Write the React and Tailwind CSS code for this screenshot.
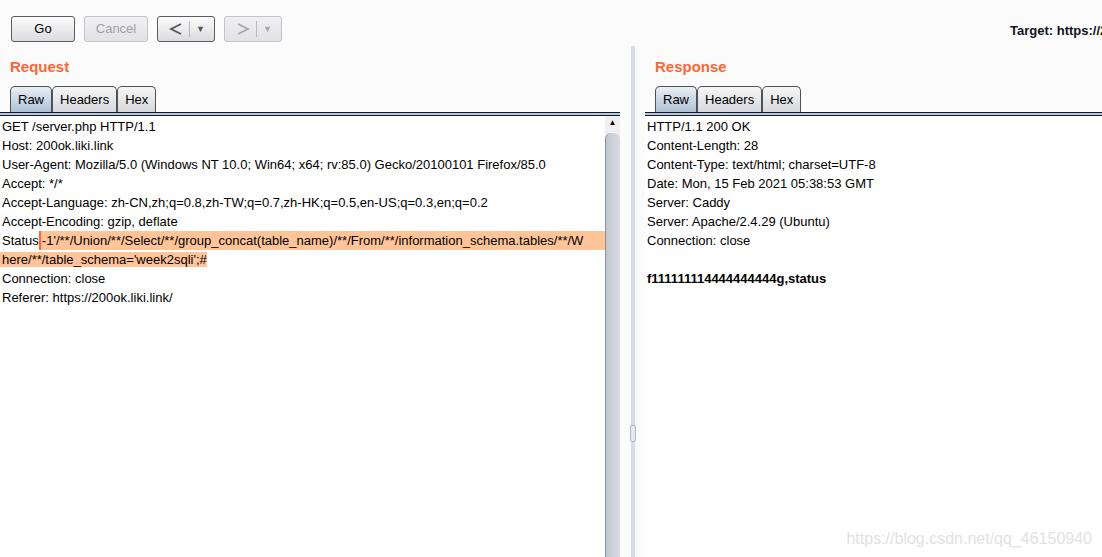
const requestLines = [
  "GET /server.php HTTP/1.1",
  "Host: 200ok.liki.link",
  "User-Agent: Mozilla/5.0 (Windows NT 10.0; Win64; x64; rv:85.0) Gecko/20100101 Firefox/85.0",
  "Accept: */*",
  "Accept-Language: zh-CN,zh;q=0.8,zh-TW;q=0.7,zh-HK;q=0.5,en-US;q=0.3,en;q=0.2",
  "Accept-Encoding: gzip, deflate",
];

const requestTail = ["Connection: close", "Referer: https://200ok.liki.link/"];

const responseLines = [
  "HTTP/1.1 200 OK",
  "Content-Length: 28",
  "Content-Type: text/html; charset=UTF-8",
  "Date: Mon, 15 Feb 2021 05:38:53 GMT",
  "Server: Caddy",
  "Server: Apache/2.4.29 (Ubuntu)",
  "Connection: close",
];

function ToolButton({ children, disabled, className = "" }) {
  return (
    <button
      className={
        "flex h-[26px] items-center justify-center rounded-[3px] border text-[13px] " +
        (disabled
          ? "border-[#c4c4c8] bg-gradient-to-b from-[#f0f0f2] to-[#e2e2e6] text-[#a0a0a4] "
          : "border-[#5c5c60] bg-gradient-to-b from-[#fbfbfb] to-[#dcdce0] text-black ") +
        className
      }
    >
      {children}
    </button>
  );
}

function ArrowButton({ dir, disabled }) {
  const stroke = disabled ? "#a8a8ac" : "#555558";
  const color = disabled ? "text-[#a8a8ac]" : "text-[#555]";
  return (
    <ToolButton disabled={disabled} className="w-[58px]">
      <svg width="14" height="14" viewBox="0 0 14 14" className="ml-[2px]">
        <polyline
          points={dir === "<" ? "12,2 2,7 12,12" : "2,2 12,7 2,12"}
          fill="none"
          stroke={stroke}
          strokeWidth="1.8"
        />
      </svg>
      <span className="mx-[6px] h-[16px] w-px bg-[#b8b8bc]" />
      <span className={"text-[9px] leading-none " + color}>▼</span>
    </ToolButton>
  );
}

function Tabs() {
  const base =
    "flex h-[26px] items-center rounded-t-[5px] border border-b-0 border-[#505058] px-[7px] text-[13px] text-black";
  return (
    <div className="flex h-[26px] pl-[10px]">
      <div className={base + " bg-gradient-to-b from-[#e8eef4] to-[#aec2d6]"}>Raw</div>
      <div className={base + " bg-gradient-to-b from-[#f6f6f6] to-[#d8d8dc]"}>Headers</div>
      <div className={base + " bg-gradient-to-b from-[#f6f6f6] to-[#d8d8dc]"}>Hex</div>
    </div>
  );
}

function TabRule() {
  return <div className="h-[4px] border-y border-[#141828] bg-[#b4c6da]" />;
}

export default function App() {
  return (
    <div
      className="relative h-[557px] w-[1102px] overflow-hidden bg-[#fbfbfb] text-black"
      style={{ fontFamily: '"Liberation Sans", Arial, sans-serif' }}
    >
      {/* toolbar */}
      <div className="flex h-[46px] items-start pt-[16px]">
        <div className="flex w-[1010px] shrink-0 gap-[9px] pl-[11px]">
          <ToolButton className="w-[64px]">Go</ToolButton>
          <ToolButton disabled className="w-[64px]">Cancel</ToolButton>
          <ArrowButton dir="<" />
          <ArrowButton dir=">" disabled />
        </div>
        <div className="whitespace-nowrap pt-[5px] text-[13px] font-bold text-[#10131c]">
          Target: https://200ok.liki.link
        </div>
      </div>

      <div className="flex h-[511px]">
        {/* request pane */}
        <div className="flex w-[620px] shrink-0 flex-col">
          <div className="flex h-[40px] items-center pl-[10px] pt-[2px] text-[15px] font-bold text-[#ff6633]">
            Request
          </div>
          <Tabs />
          <TabRule />
          <div className="flex flex-1">
            <div className="w-[605px] bg-white pt-[1px] text-[13px] leading-[19px]">
              {requestLines.map((l) => (
                <div key={l} className="whitespace-nowrap pl-[2px]">{l}</div>
              ))}
              <div className="flex whitespace-nowrap">
                <span className="pl-[2px]">Status</span>
                <span className="h-[19px] w-[2px] bg-[#ff6633]" />
                <span className="flex-1 bg-[#ffc599] pl-[1px]">
                  -1'/**/Union/**/Select/**/group_concat(table_name)/**/From/**/information_schema.tables/**/W
                </span>
              </div>
              <div className="whitespace-nowrap">
                <span className="bg-[#ffc599] pl-[2px]">here/**/table_schema='week2sqli';#</span>
              </div>
              {requestTail.map((l) => (
                <div key={l} className="whitespace-nowrap pl-[2px]">{l}</div>
              ))}
            </div>
            {/* scrollbar */}
            <div className="flex w-[15px] flex-col bg-[#f0f0f2]">
              <div className="flex h-[17px] items-start justify-center pt-[3px] text-[8px] leading-none text-black">
                ▲
              </div>
              <div className="flex-1 rounded-t-[6px] border-l border-[#8c9098] bg-gradient-to-r from-[#c2c6ce] to-[#d8dbe1]" />
            </div>
          </div>
        </div>

        {/* divider */}
        <div className="flex w-[25px] shrink-0 justify-start pl-[11px]">
          <div className="relative w-[4px] bg-[#d8dce4]">
            <div className="absolute left-[-1px] top-[379px] h-[17px] w-[6px] rounded-[2px] border border-[#b4b8c0] bg-[#e6e8ec]" />
          </div>
        </div>

        {/* response pane */}
        <div className="flex flex-1 flex-col">
          <div className="flex h-[40px] items-center pl-[10px] pt-[2px] text-[15px] font-bold text-[#ff6633]">
            Response
          </div>
          <Tabs />
          <TabRule />
          <div className="flex-1 bg-white pl-[2px] pt-[1px] text-[13px] leading-[19px]">
            {responseLines.map((l) => (
              <div key={l} className="whitespace-nowrap">{l}</div>
            ))}
            <div className="h-[19px]" />
            <div className="whitespace-nowrap font-bold">f111111114444444444g,status</div>
          </div>
        </div>
      </div>

      <div className="absolute bottom-[6px] right-[10px] text-[16px] text-[#e2e2e2]">
        https://blog.csdn.net/qq_46150940
      </div>
    </div>
  );
}
